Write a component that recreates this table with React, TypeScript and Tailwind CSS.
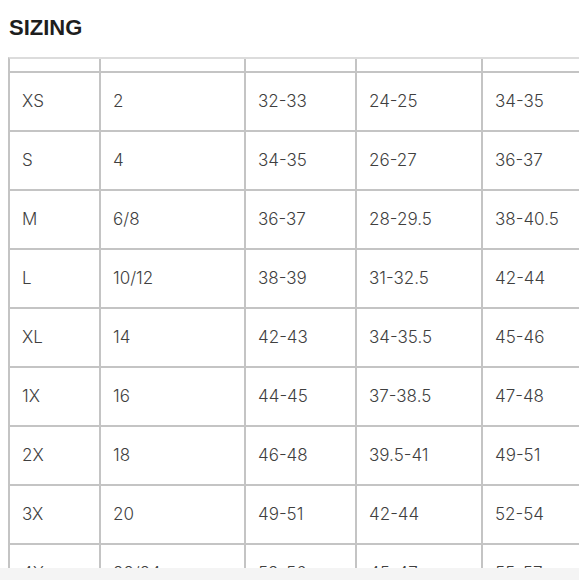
const rows = [
  ['XS', '2', '32-33', '24-25', '34-35'],
  ['S', '4', '34-35', '26-27', '36-37'],
  ['M', '6/8', '36-37', '28-29.5', '38-40.5'],
  ['L', '10/12', '38-39', '31-32.5', '42-44'],
  ['XL', '14', '42-43', '34-35.5', '45-46'],
  ['1X', '16', '44-45', '37-38.5', '47-48'],
  ['2X', '18', '46-48', '39.5-41', '49-51'],
  ['3X', '20', '49-51', '42-44', '52-54'],
  ['4X', '22/24', '53-56', '45-47', '55-57'],
]

const widths = ['w-[91px]', 'w-[145px]', 'w-[111px]', 'w-[126px]', 'w-[140px]']

export default function App() {
  return (
    <div className="h-[580px] w-[579px] flex flex-col bg-white overflow-hidden">
      <div className="flex-1 overflow-hidden">
        <h1 className="pt-[15px] pl-[9px] text-[22px] leading-[25px] font-bold text-[#1e1e1e] font-['Liberation_Sans',Arial,sans-serif]">
          SIZING
        </h1>

        <div className="mt-[17px] ml-[8px] w-[640px] border-t-2 border-l-2 border-t-[#dcdcdc] border-l-[#c4c4c4] font-['Inter',sans-serif] font-light text-[17px] text-[#3f3f3f]">
          <div className="flex h-[14px] border-b-2 border-[#c4c4c4]">
            {widths.map((w, i) => (
              <div key={i} className={`${w} shrink-0 border-r-2 border-[#c4c4c4]`} />
            ))}
          </div>
          {rows.map((r) => (
            <div key={r[0]} className="flex h-[59px] border-b-2 border-[#c4c4c4]">
              {r.map((cell, i) => (
                <div
                  key={i}
                  className={`${widths[i]} shrink-0 border-r-2 border-[#c4c4c4] pl-3 flex items-center`}
                >
                  {cell}
                </div>
              ))}
            </div>
          ))}
        </div>
      </div>
      <div className="h-[12px] bg-[#f4f4f4]" />
    </div>
  )
}
